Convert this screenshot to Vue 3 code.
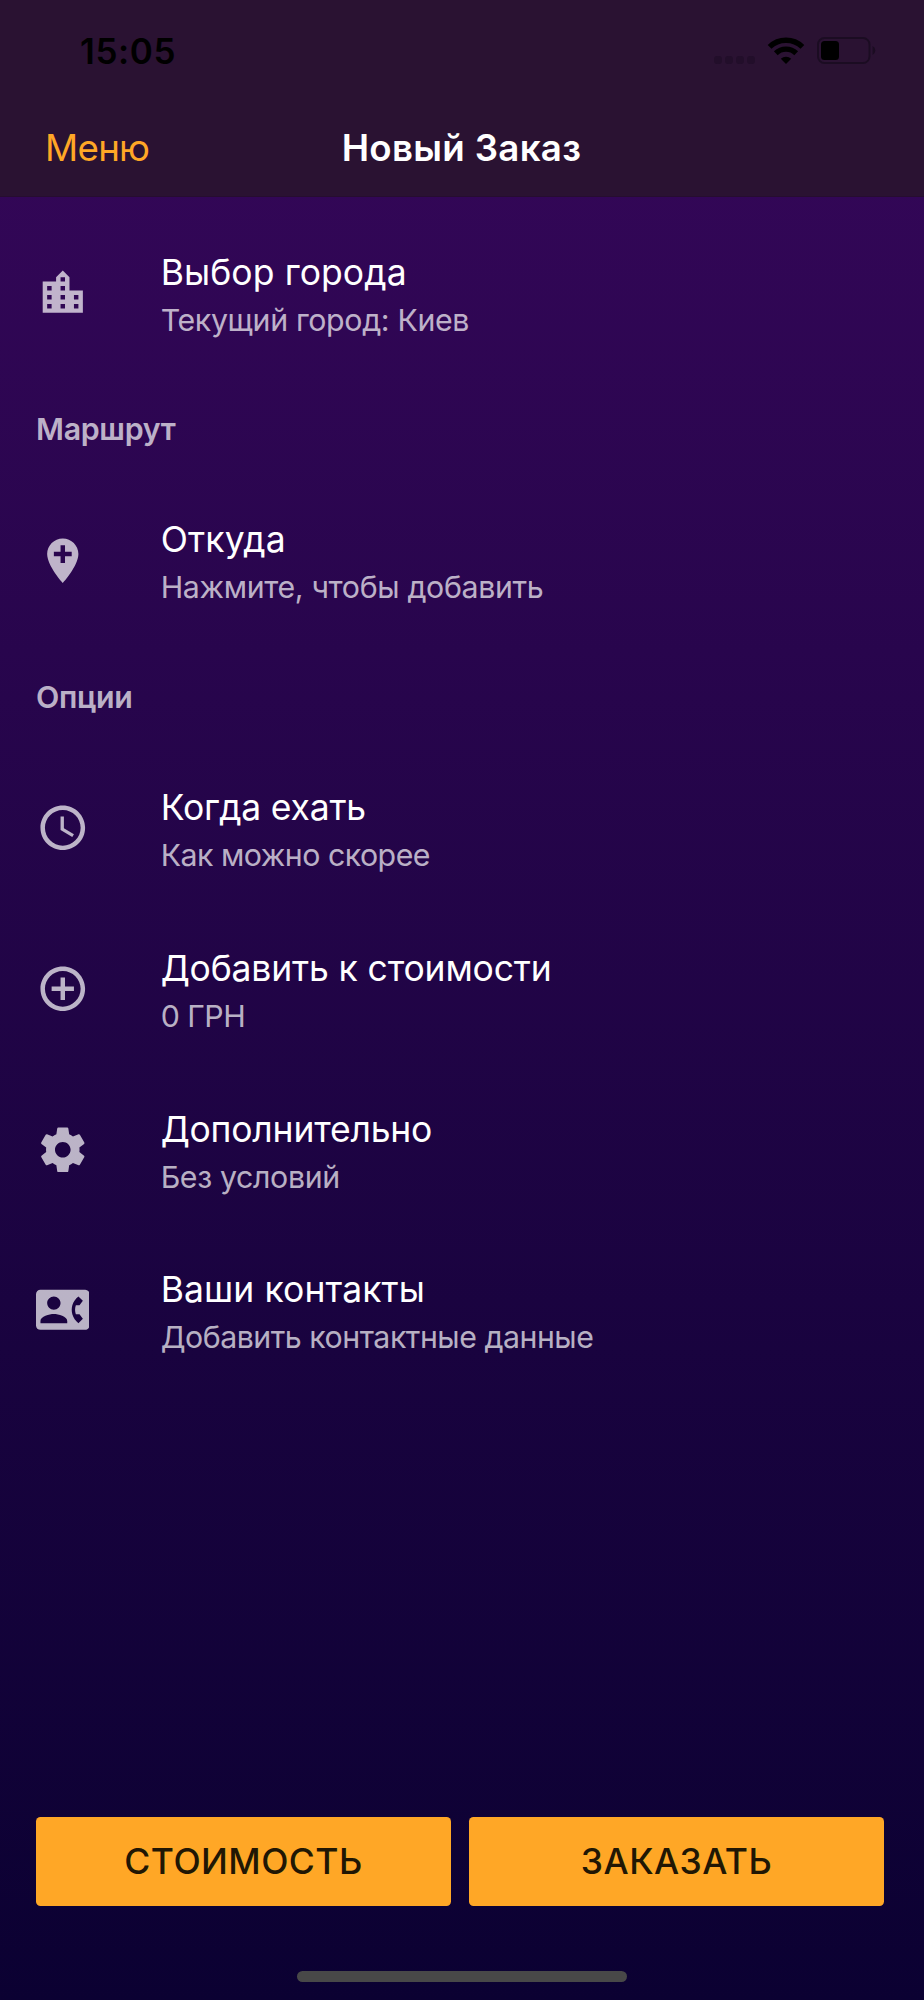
<script setup>
const icons = {
  city: 'M15 11V5l-3-3-3 3v2H3v14h18V11h-6zm-8 8H5v-2h2v2zm0-4H5v-2h2v2zm0-4H5V9h2v2zm6 8h-2v-2h2v2zm0-4h-2v-2h2v2zm0-4h-2V9h2v2zm0-4h-2V5h2v2zm6 12h-2v-2h2v2zm0-4h-2v-2h2v2z',
  pin: 'M12 2C8.14 2 5 5.14 5 9c0 5.25 7 13 7 13s7-7.75 7-13c0-3.86-3.14-7-7-7zm4 8h-3v3h-2v-3H8V8h3V5h2v3h3v2z',
  clock: 'M11.99 2C6.47 2 2 6.48 2 12s4.47 10 9.99 10C17.52 22 22 17.52 22 12S17.52 2 11.99 2zM12 20c-4.42 0-8-3.58-8-8s3.58-8 8-8 8 3.58 8 8-3.58 8-8 8zm.5-13H11v6l5.25 3.15.75-1.23-4.5-2.67z',
  plus: 'M13 7h-2v4H7v2h4v4h2v-4h4v-2h-4V7zm-1-5C6.48 2 2 6.48 2 12s4.48 10 10 10 10-4.48 10-10S17.52 2 12 2zm0 18c-4.41 0-8-3.59-8-8s3.59-8 8-8 8 3.59 8 8-3.59 8-8 8z',
  gear: 'M19.43 12.98c.04-.32.07-.64.07-.98s-.03-.66-.07-.98l2.11-1.65c.19-.15.24-.42.12-.64l-2-3.46c-.12-.22-.39-.3-.61-.22l-2.49 1c-.52-.4-1.08-.73-1.69-.98l-.38-2.65C14.46 2.18 14.25 2 14 2h-4c-.25 0-.46.18-.49.42l-.38 2.65c-.61.25-1.17.59-1.69.98l-2.49-1c-.23-.09-.49 0-.61.22l-2 3.46c-.13.22-.07.49.12.64l2.11 1.65c-.04.32-.07.65-.07.98s.03.66.07.98l-2.11 1.65c-.19.15-.24.42-.12.64l2 3.46c.12.22.39.3.61.22l2.49-1c.52.4 1.08.73 1.69.98l.38 2.65c.03.24.24.42.49.42h4c.25 0 .46-.18.49-.42l.38-2.65c.61-.25 1.17-.59 1.69-.98l2.49 1c.23.09.49 0 .61-.22l2-3.46c.12-.22.07-.49-.12-.64l-2.11-1.65zM12 15.5c-1.93 0-3.5-1.57-3.5-3.5s1.57-3.5 3.5-3.5 3.5 1.57 3.5 3.5-1.57 3.5-3.5 3.5z',
  contact: 'M22 3H2C.9 3 0 3.9 0 5v14c0 1.1.9 2 2 2h20c1.1 0 1.99-.9 1.99-2L24 5c0-1.1-.9-2-2-2zM8 6c1.66 0 3 1.34 3 3s-1.34 3-3 3-3-1.34-3-3 1.34-3 3-3zm6 12H2v-1c0-2 4-3.1 6-3.1s6 1.1 6 3.1v1zm3.85-4h1.64L21 16l-1.99 1.99c-1.31-.98-2.28-2.38-2.73-3.99-.18-.64-.28-1.31-.28-2s.1-1.36.28-2c.45-1.62 1.42-3.01 2.73-3.99L21 8l-1.51 2h-1.64c-.22.63-.35 1.3-.35 2s.13 1.37.35 2z'
}

// track: letter spacing of the title and of the subtitle, in pixels
const groups = [
  { rows: [{ icon: 'city', title: 'Выбор города', sub: 'Текущий город: Киев', track: [0.1, -0.34] }] },
  { name: 'Маршрут', rows: [{ icon: 'pin', title: 'Откуда', sub: 'Нажмите, чтобы добавить', track: [0.2, -0.34] }] },
  {
    name: 'Опции',
    rows: [
      { icon: 'clock', title: 'Когда ехать', sub: 'Как можно скорее', track: [-0.2, -0.5] },
      { icon: 'plus', title: 'Добавить к стоимости', sub: '0 ГРН', track: [-0.15, -0.5] },
      { icon: 'gear', title: 'Дополнительно', sub: 'Без условий', track: [-0.2, -0.35] },
      { icon: 'contact', title: 'Ваши контакты', sub: 'Добавить контактные данные', track: [0.1, -0.48] }
    ]
  }
]
</script>

<template>
  <div class="screen">
    <header>
      <div class="status">
        <span class="time">15:05</span>
        <div class="indicators">
          <div class="dots"><i v-for="n in 4" :key="n"></i></div>
          <svg class="wifi" width="38" height="28" viewBox="0 0 38 28">
            <g fill="none" stroke="#000" stroke-width="5.4">
              <path d="M2.6 9.9A23.5 23.5 0 0 1 35.4 9.9" />
              <path d="M8.8 16.3A14.6 14.6 0 0 1 29.2 16.3" />
            </g>
            <path d="M19 27l-5.2-5.3a7.6 7.6 0 0 1 10.4 0z" />
          </svg>
          <svg class="battery" width="60" height="28" viewBox="0 0 60 28">
            <rect x="1" y="1" width="51.5" height="25" rx="6.5" fill="none" stroke="#1b0c22" stroke-width="2" />
            <rect x="4" y="4" width="18" height="19" rx="3.5" />
            <path d="M55.5 9a5 5 0 0 1 0 9z" fill="#1b0c22" />
          </svg>
        </div>
      </div>
      <div class="nav">
        <span class="menu">Меню</span>
        <h1>Новый Заказ</h1>
      </div>
    </header>

    <main>
      <section v-for="(g, i) in groups" :key="i">
        <h2 v-if="g.name">{{ g.name }}</h2>
        <div v-for="r in g.rows" :key="r.icon" class="row">
          <svg class="icon" viewBox="0 0 24 24"><path :d="icons[r.icon]" /></svg>
          <div class="text">
            <div class="title" :style="{ letterSpacing: r.track[0] + 'px' }">{{ r.title }}</div>
            <div class="sub" :style="{ letterSpacing: r.track[1] + 'px' }">{{ r.sub }}</div>
          </div>
        </div>
      </section>
    </main>

    <footer>
      <div class="actions">
        <button>СТОИМОСТЬ</button>
        <button>ЗАКАЗАТЬ</button>
      </div>
      <div class="home"></div>
    </footer>
  </div>
</template>

<style>
body { margin: 0; background: #0b0132; }
</style>

<style scoped>
.screen {
  width: 924px;
  height: 2000px;
  display: flex;
  flex-direction: column;
  overflow: hidden;
  font-family: Inter, "Liberation Sans", sans-serif;
  color: #fff;
  background: linear-gradient(to bottom, #36075a 0, #0b0132 100%);
}
header { height: 197px; box-sizing: border-box; background: #2a1232; border-bottom: 1px solid #260d30; flex: none; }
.status { height: 98px; display: flex; justify-content: space-between; padding: 0 47px 0 80px; }
.time { font-size: 35px; line-height: 42px; font-weight: 600; color: #000; margin-top: 30px; letter-spacing: 0.6px; }
.indicators { display: flex; height: 28px; margin-top: 37px; }
.dots { display: flex; gap: 3px; align-items: flex-end; padding-bottom: 1px; margin-right: 12px; }
.dots i { width: 8px; height: 8px; border-radius: 3px; background: #220e2a; }
.wifi { margin-right: 12px; }
.nav { height: 98px; display: grid; grid-template-columns: 1fr auto 1fr; align-items: start; padding: 27px 46px 0 45px; box-sizing: border-box; }
.menu { font-size: 36.7px; line-height: 46px; color: #ffa726; letter-spacing: -0.7px; }
h1 { margin: 0; font-size: 36.7px; line-height: 46px; font-weight: 600; letter-spacing: 0.3px; }
main { flex: 1; padding-top: 15.2px; }
h2 { margin: 0; height: 107.14px; line-height: 113px; padding-left: 36px; font-size: 30.3px; font-weight: 600; letter-spacing: -0.3px; color: rgba(255,255,255,.7); }
.row { height: 160.7px; display: flex; align-items: center; padding-left: 35.7px; }
.icon { width: 53.57px; height: 53.57px; fill: rgba(255,255,255,.7); margin-right: 71.4px; flex: none; }
.text { padding-top: 6px; }
.title { font-size: 35.5px; line-height: 48px; white-space: nowrap; }
.sub { font-size: 30.3px; line-height: 46px; color: rgba(255,255,255,.7); white-space: nowrap; }
footer { height: 183px; flex: none; }
.actions { display: flex; gap: 18px; padding: 0 40px 0 36px; }
button {
  flex: 1; height: 89px; border: 0; border-radius: 4.5px; padding: 0;
  background: #ffa726; color: #211704; font: 500 35.5px/89px Inter, sans-serif; letter-spacing: 0.45px;
}
.home { width: 330px; height: 11px; border-radius: 6px; background: #484848; margin: 65px auto 0; }
</style>
